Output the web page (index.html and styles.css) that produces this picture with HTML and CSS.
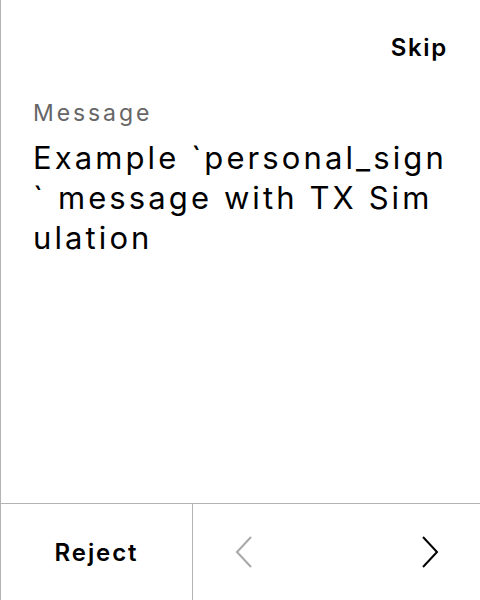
FILE: index.html
```html
<!DOCTYPE html>
<html>
<head>
<meta charset="utf-8">
<link rel="stylesheet" href="styles.css">
</head>
<body>
<div class="screen">
  <div class="top">
    <span class="skip">Skip</span>
  </div>
  <div class="content">
    <div class="label">Message</div>
    <div class="message">Example `personal_sign` message with TX Simulation</div>
  </div>
  <div class="footer">
    <div class="reject">Reject</div>
    <div class="nav">
      <svg class="chev" width="18" height="32" viewBox="0 0 18 32"><path d="M16 1 L2 16 L16 31" fill="none" stroke="#a8a8a8" stroke-width="2"/></svg>
      <svg class="chev" width="18" height="32" viewBox="0 0 18 32"><path d="M2 1 L16 16 L2 31" fill="none" stroke="#000" stroke-width="2"/></svg>
    </div>
  </div>
</div>
</body>
</html>
```
FILE: styles.css
```css
html, body { margin: 0; padding: 0; background: #fff; }
body { font-family: Inter, "Noto Sans", sans-serif; color: #000; }
.screen {
  width: 480px; height: 600px; box-sizing: border-box;
  border-left: 1px solid #b3b3b3;
  display: flex; flex-direction: column;
}
.top { height: 96px; display: flex; justify-content: flex-end; align-items: flex-start; padding: 0 32px 0 0; box-sizing: border-box; }
.skip { font-size: 24px; font-weight: 600; margin-top: 33px; line-height: 30px; letter-spacing: 1.7px; }
.content { flex: 1; padding: 0 32px; }
.label { font-size: 23px; color: #666; line-height: 30px; margin-top: 2px; letter-spacing: 2.9px; }
.message { font-size: 31px; line-height: 40px; word-break: break-all; margin-top: 10px; letter-spacing: 3.1px; }
.footer { height: 96px; border-top: 1px solid #b3b3b3; display: flex; }
.reject { width: 191px; border-right: 1px solid #b3b3b3; display: flex; align-items: center; justify-content: center; font-size: 24px; font-weight: 600; letter-spacing: 1.9px; }
.nav { flex: 1; display: flex; align-items: center; justify-content: space-between; padding: 0 41px 0 42px; }
.chev { display: block; }
```
